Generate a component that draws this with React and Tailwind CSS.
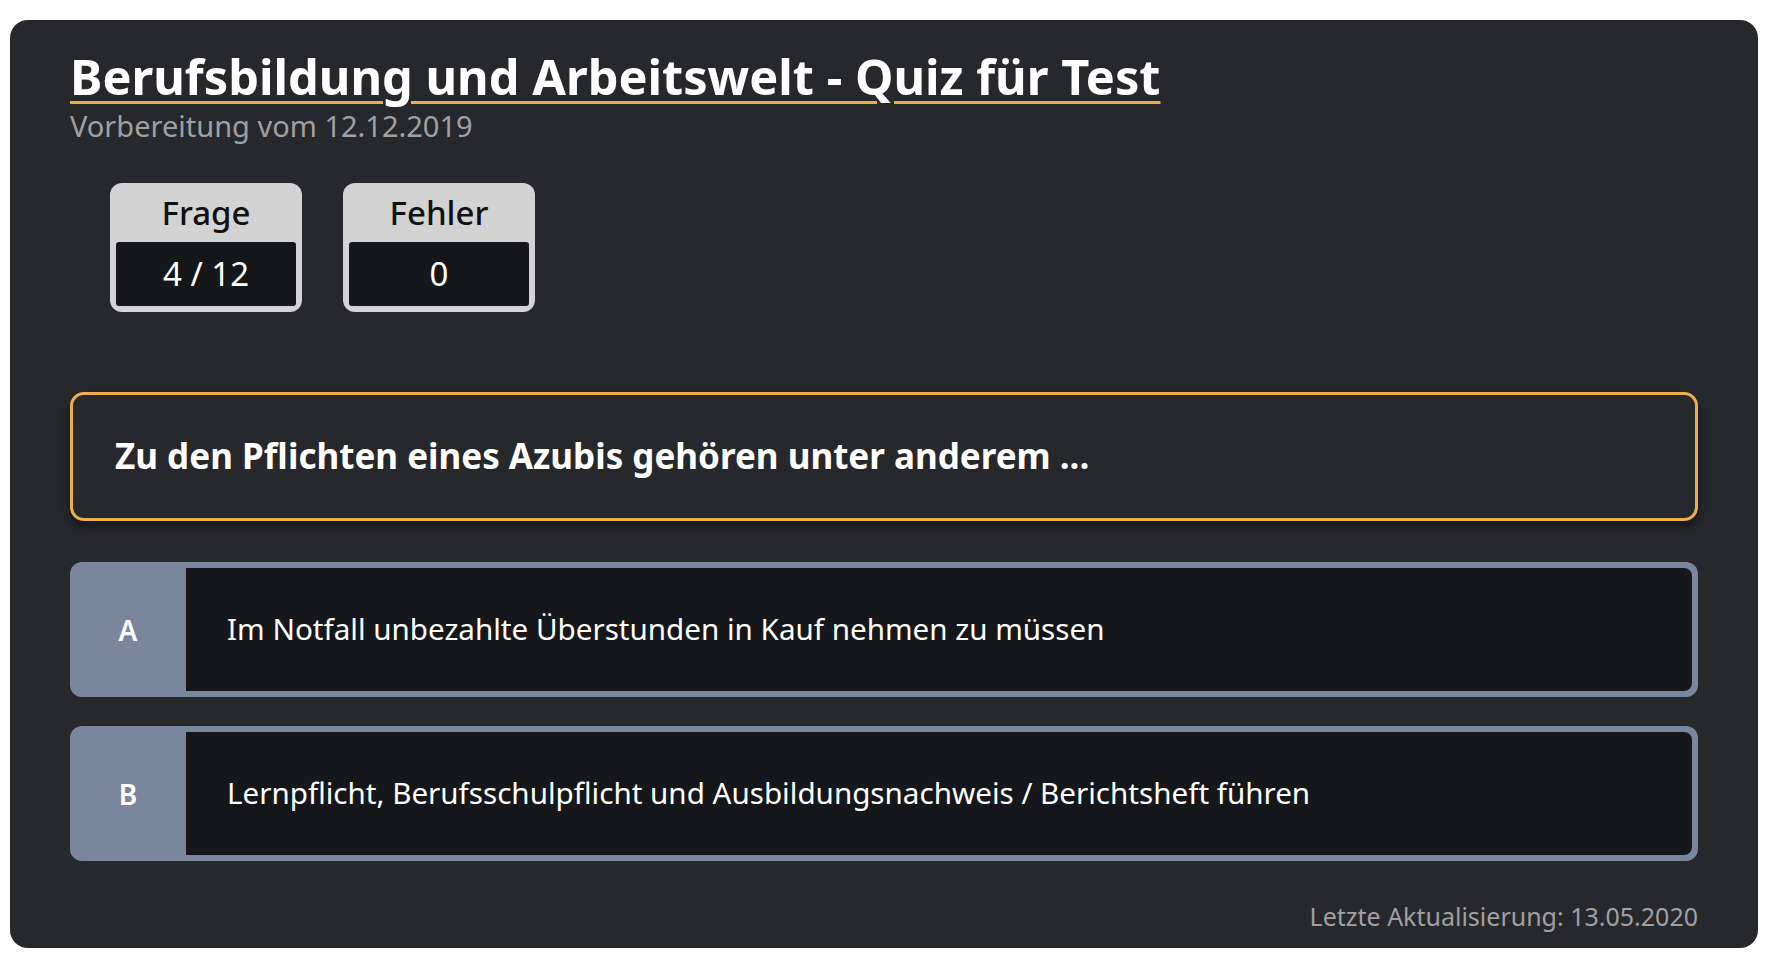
const ANSWERS = [
  { key: "A", text: "Im Notfall unbezahlte Überstunden in Kauf nehmen zu müssen" },
  { key: "B", text: "Lernpflicht, Berufsschulpflicht und Ausbildungsnachweis / Berichtsheft führen" },
];

function StatBox({ label, value }) {
  return (
    <div className="w-[192px] h-[129px] rounded-[12px] bg-[#d3d3d3] p-[6px] pt-0 flex flex-col">
      <div className="h-[59px] flex items-center justify-center text-[33px] text-[#111] font-medium">
        {label}
      </div>
      <div className="flex-1 bg-[#16171a] rounded-[3px] flex items-center justify-center text-[33px] text-white">
        {value}
      </div>
    </div>
  );
}

export default function App() {
  return (
    <div
      className="min-h-screen bg-white pl-[10px] pr-[16px] pt-[20px] pb-[12px]"
      style={{ fontFamily: '"Noto Sans", sans-serif' }}
    >
      <div className="rounded-[18px] bg-[#27282c] px-[60px] pt-[28px] pb-[17px] flex flex-col">
        {/* Header */}
        <h1 className="text-[48.7px] leading-[56px] font-bold text-white">
          <span className="underline decoration-[#eaae4a] decoration-[3px] underline-offset-[6px]">
            Berufsbildung und Arbeitswelt - Quiz für Test
          </span>
        </h1>
        <p className="mt-[5px] text-[29px] leading-[34px] text-[#a0a0a2]">
          Vorbereitung vom 12.12.2019
        </p>

        {/* Stats */}
        <div className="mt-[40px] ml-[40px] flex gap-[41px]">
          <StatBox label="Frage" value="4 / 12" />
          <StatBox label="Fehler" value="0" />
        </div>

        {/* Question */}
        <div className="mt-[80px] h-[129px] rounded-[14px] border-[3px] border-[#eaae4a] shadow-[0_6px_10px_rgba(0,0,0,0.45)] flex items-center px-[42px]">
          <span className="text-[35px] font-bold text-white">
            Zu den Pflichten eines Azubis gehören unter anderem ...
          </span>
        </div>

        {/* Answers */}
        <div className="mt-[41px] flex flex-col gap-[29px]">
          {ANSWERS.map((a) => (
            <div
              key={a.key}
              className="h-[135px] rounded-[12px] bg-[#7a869b] p-[6px] pl-0 flex"
            >
              <div className="w-[116px] flex items-center justify-center text-[28px] font-semibold text-white">
                {a.key}
              </div>
              <div className="flex-1 rounded-r-[8px] bg-[#16171a] flex items-center pl-[41px] text-[29.6px] text-white">
                {a.text}
              </div>
            </div>
          ))}
        </div>

        {/* Footer */}
        <div className="mt-[40px] text-right text-[25px] leading-[30px] text-[#a0a0a2]">
          Letzte Aktualisierung: 13.05.2020
        </div>
      </div>
    </div>
  );
}
